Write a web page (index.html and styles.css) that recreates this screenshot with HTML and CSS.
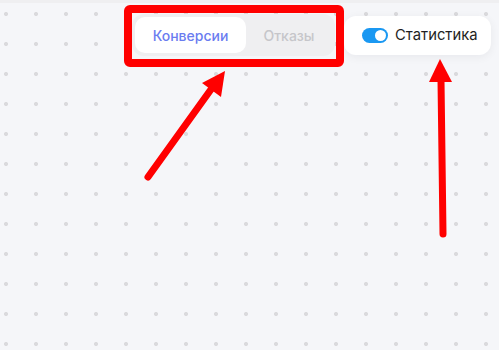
FILE: index.html
```html
<!DOCTYPE html>
<html lang="ru">
<head>
<meta charset="utf-8">
<link rel="stylesheet" href="styles.css">
</head>
<body>
<div class="canvas">
  <div class="topline"></div>
  <div class="toolbar">
    <div class="segmented">
      <button class="tab tab-active">Конверсии</button>
      <button class="tab tab-muted">Отказы</button>
    </div>
    <button class="stats-btn">
      <span class="toggle"><span class="knob"></span></span>
      <span class="stats-label">Статистика</span>
    </button>
  </div>
  <div class="highlight"></div>
  <svg class="annot" width="499" height="350" viewBox="0 0 499 350">
    <line x1="148" y1="177" x2="212" y2="88" stroke="#ff0000" stroke-width="7" stroke-linecap="round"/>
    <polygon points="225,71 202,83 221,97" fill="#ff0000"/>
    <line x1="441" y1="80" x2="443" y2="234" stroke="#ff0000" stroke-width="7" stroke-linecap="round"/>
    <polygon points="440,59 429,82 452,82" fill="#ff0000"/>
  </svg>
</div>
</body>
</html>
```
FILE: styles.css
```css
* { box-sizing: border-box; }
html, body { margin: 0; padding: 0; }
body {
  width: 499px;
  height: 350px;
  overflow: hidden;
  font-family: Inter, "Noto Sans", sans-serif;
}
.canvas {
  position: relative;
  width: 499px;
  height: 350px;
  background-color: #f5f6f9;
  background-image: radial-gradient(circle at center, #dadadd 0, #dadadd 1.8px, transparent 2.3px);
  background-size: 30px 30px;
  background-position: -9px -1px;
}
.topline {
  height: 3px;
  background: #efeff1;
}
.toolbar {
  display: flex;
  justify-content: flex-end;
  align-items: center;
  gap: 9px;
  padding: 11px 8px 0 0;
}
.segmented {
  display: flex;
  padding: 3px;
  background: #efeff1;
  border-radius: 12px;
  height: 42px;
}
.tab {
  border: 0;
  background: transparent;
  font-family: inherit;
  font-size: 14px;
  font-weight: 500;
  border-radius: 10px;
  height: 36px;
  padding: 0;
  cursor: pointer;
}
.tab-active {
  width: 111px;
  background: #ffffff;
  color: #6a7cf0;
}
.tab-muted {
  width: 86px;
  color: #c6c6ca;
}
.stats-btn {
  display: flex;
  align-items: center;
  gap: 7px;
  height: 39px;
  width: 147px;
  padding: 0 0 0 18px;
  border: 0;
  background: #ffffff;
  border-radius: 12px;
  box-shadow: 0 2px 10px rgba(20, 20, 40, 0.06);
  font-family: inherit;
  cursor: pointer;
}
.toggle {
  position: relative;
  width: 26px;
  height: 15px;
  border-radius: 8px;
  background: #1a98f2;
}
.knob {
  position: absolute;
  top: 2px;
  right: 2px;
  width: 11px;
  height: 11px;
  border-radius: 50%;
  background: #ffffff;
}
.stats-label {
  font-size: 14.8px;
  color: #1f1f23;
}
.highlight {
  position: absolute;
  left: 124px;
  top: 5px;
  width: 220px;
  height: 62px;
  border: 8px solid #ff0000;
  border-radius: 6px;
}
.annot {
  position: absolute;
  left: 0;
  top: 0;
}
```
